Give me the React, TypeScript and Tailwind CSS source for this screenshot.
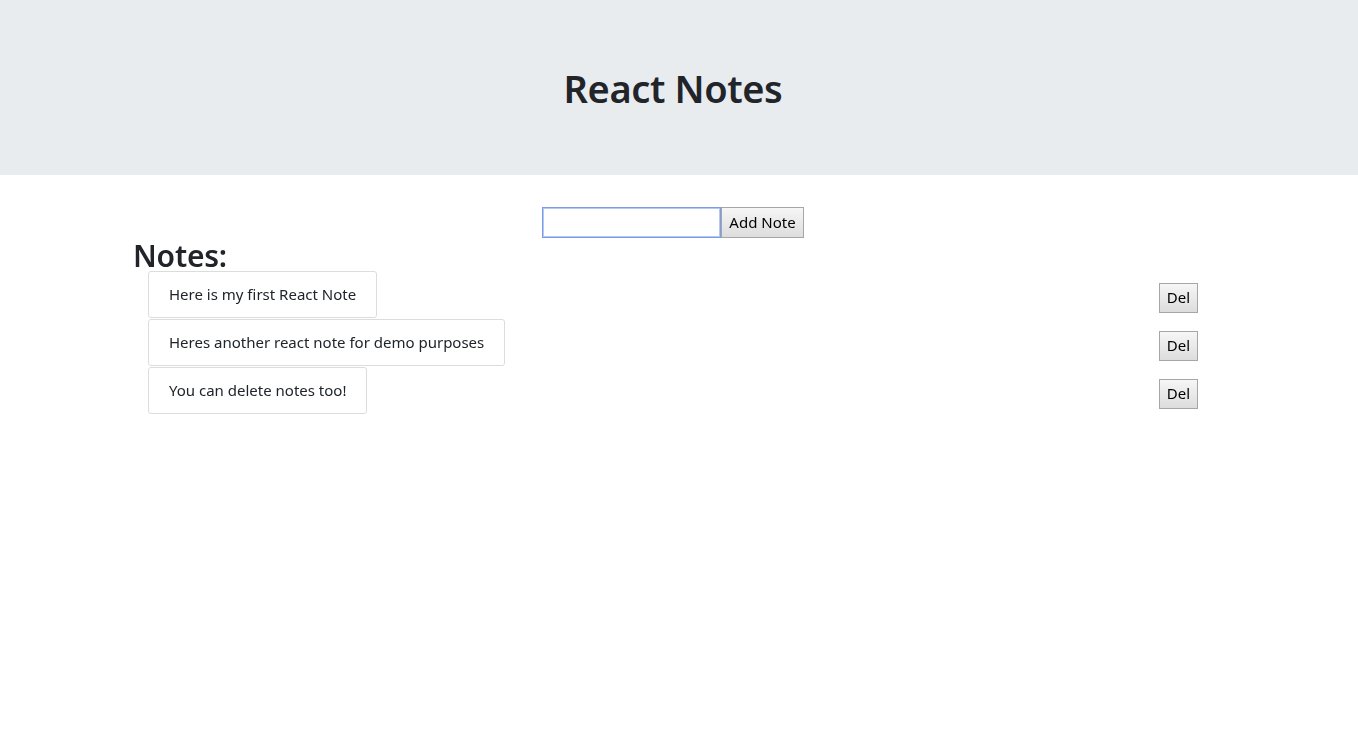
import React from "react";

const notes = [
  "Here is my first React Note",
  "Heres another react note for demo purposes",
  "You can delete notes too!",
];

export default function App() {
  return (
    <div className="min-h-[755px] bg-white text-[#212529]" style={{ fontFamily: '"Noto Sans", "Open Sans", sans-serif' }}>
      <div className="h-[175px] bg-[#e9ecef] flex items-center justify-center pr-[12px]">
        <h1 className="text-[38px] font-semibold leading-[1.2] mt-[3px] tracking-[-0.4px]">React Notes</h1>
      </div>
      <div className="flex justify-center pt-[32px] pr-[12px]">
        <input
          className="w-[179px] h-[31px] border border-[#7b9de8] outline outline-1 outline-[#b5c8f2] -outline-offset-2 bg-white px-1 text-[15px] caret-black"
          style={{ fontFamily: '"Noto Sans", sans-serif' }}
          autoFocus
        />
        <button className="h-[31px] px-[7px] border border-[#a6a6a6] bg-gradient-to-b from-[#f6f6f6] to-[#dddddd] text-[15px] leading-none text-black">
          Add Note
        </button>
      </div>
      <div className="pl-[133px] pr-[160px]">
        <h2 className="text-[30px] font-semibold leading-[1.2] tracking-[-0.2px]">Notes:</h2>
        <ul className="pl-[15px] -mt-[3px]">
          {notes.map((n) => (
            <li key={n} className="flex items-center justify-between">
              <div className="border border-[#dcdcdc] rounded-[3px] px-[20px] h-[47px] mb-px flex items-center text-[15px]">
                {n}
              </div>
              <button className="h-[30px] w-[39px] mt-[5px] border border-[#a6a6a6] bg-gradient-to-b from-[#f6f6f6] to-[#dddddd] text-[15px] leading-none text-black">
                Del
              </button>
            </li>
          ))}
        </ul>
      </div>
    </div>
  );
}
